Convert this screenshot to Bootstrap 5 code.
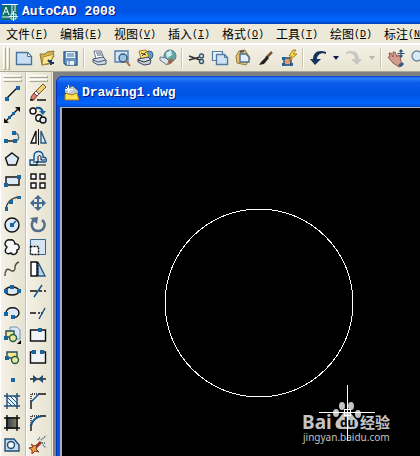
<!DOCTYPE html>
<html lang="zh-CN">
<head>
<meta charset="utf-8">
<meta name="viewport" content="width=device-width, initial-scale=1">
<title>AutoCAD 2008</title>
<link href="https://cdn.jsdelivr.net/npm/bootstrap@5.3.0/dist/css/bootstrap.min.css" rel="stylesheet">
<style>
  :root { --face: #ece9d8; --line: #c5c2b0; }
  body { background: var(--face); font-family: "Noto Sans CJK SC", "Liberation Sans", sans-serif; font-size: 12px; color: #000; }
  button { border: 0; background: none; padding: 0; color: inherit; flex: none; }
  button:hover { background: #c1d2ee; }
  .titlebar { height: 24px; padding-left: 2px; background: linear-gradient(#0058e6 0, #0054e3 45%, #0066ff 85%, #0050d8 93%, #003bb5 100%); }
  .caption-text { font: bold 13px/20px "Liberation Mono", monospace; color: #fff; text-shadow: 1px 1px 0 #0a1883; margin: 0; white-space: pre; }
  .menu-row { height: 20px; padding-left: 6px; background: var(--face); border-bottom: 1px solid #fff; }
  .menu-btn { width: 42px; margin-right: 12px; text-align: left; line-height: 18px; white-space: nowrap; display: flex; align-items: center; }
  .menu-key { font: 10px/18px "Liberation Mono", monospace; padding-top: 2px; }
  .tool-row { height: 28px; border-top: 1px solid #fff; border-bottom: 1px solid #aca899; background: linear-gradient(#f3f1e6, #e8e4d2); }
  .grip-v { width: 12px; height: 23px; padding-left: 3px; gap: 1px; }
  .grip-v i { width: 3px; border: 1px solid #fff; border-right-color: #aca899; border-bottom-color: #aca899; }
  .grip-h { height: 12px; padding: 3px 3px 0 2px; gap: 1px; }
  .grip-h i { height: 3px; border: 1px solid #fff; border-right-color: #aca899; border-bottom-color: #aca899; }
  .sep { width: 6px; height: 20px; flex: none; padding-left: 2px; }
  .sep::before { content: ""; display: block; width: 2px; height: 100%; border-left: 1px solid #c8c4b2; border-right: 1px solid #fff; }
  .tb { width: 23px; height: 23px; display: grid; place-items: center; }
  .tb.wide { width: 24px; }
  .tb.drop { width: 12px; }
  .side { width: 26px; flex: none; background: linear-gradient(90deg, #f4f1e5, #e6e2d0); border-right: 1px solid var(--line); border-left: 1px solid #fff; overflow: hidden; }
  .side button { height: 22px; padding-right: 2px; display: grid; place-items: center; }
  svg.ico { width: 20px; height: 20px; display: block; fill: none; stroke: #111; stroke-width: 1.4; }
  svg.ico .b { stroke: #0f548c; } svg.ico .dot { fill: #1766a0; stroke: none; } svg.ico .pale { fill: #dceaf7; }
  .mdi { background: #808080; padding: 4px 0 0 3px; border-left: 1px solid var(--face); min-width: 0; }
  .doc { background: #0850dd; border-top-left-radius: 7px; padding-left: 4px; min-width: 0; overflow: hidden; box-shadow: inset 1px 1px 0 #0831b8; }
  .doc-title { height: 31px; margin-left: -3px; padding: 3px 0 0 6px; gap: 2px; background: linear-gradient(#0a43c4 0, #2b80ff 8%, #0a5ce9 22%, #0054e3 60%, #0066ff 88%, #0049c8 100%); border-top-left-radius: 7px; }
  .canvas { background: #000; border-left: 2px solid #a5aec0; border-top: 1px solid #a5aec0; min-height: 0; }
  .canvas svg { width: 100%; height: 100%; display: block; }
  .wm { fill: #c4c4c4; font-family: "Noto Sans", "Noto Sans CJK SC", sans-serif; }
</style>
<script src="https://cdn.jsdelivr.net/npm/bootstrap@5.3.0/dist/js/bootstrap.bundle.min.js"></script>
</head>
<body class="d-flex flex-column vh-100 overflow-hidden">
<header class="titlebar d-flex align-items-center flex-shrink-0">
  <svg width="16" height="18" viewBox="0 0 16 18" class="me-1" aria-hidden="true"><path fill="#126b68" d="M0 1h16v16H0z"/><path stroke="#e8ffff" fill="none" d="M0 1.500h16M1 12L4 4l3 8M2 9h4M10 2v9M13 2v7M0 14h8M9 11h5v5H9zM11.500 8v10M7 13.500h9"/></svg>
  <h1 class="caption-text">AutoCAD 2008</h1>
</header>
<nav class="menu-row d-flex flex-shrink-0" aria-label="菜单">
  <button class="menu-btn">文件<span class="menu-key">(<u>F</u>)</span></button>
  <button class="menu-btn">编辑<span class="menu-key">(<u>E</u>)</span></button>
  <button class="menu-btn">视图<span class="menu-key">(<u>V</u>)</span></button>
  <button class="menu-btn">插入<span class="menu-key">(<u>I</u>)</span></button>
  <button class="menu-btn">格式<span class="menu-key">(<u>O</u>)</span></button>
  <button class="menu-btn">工具<span class="menu-key">(<u>T</u>)</span></button>
  <button class="menu-btn">绘图<span class="menu-key">(<u>D</u>)</span></button>
  <button class="menu-btn">标注<span class="menu-key">(<u>N</u>)</span></button>
</nav>
<div class="tool-row d-flex align-items-center flex-shrink-0" role="toolbar" aria-label="标准">
  <div class="grip-v d-flex flex-shrink-0"><i></i><i></i></div>
  <button class="tb" aria-label="新建"><svg class="ico" viewBox="0 0 20 20"><path fill="#c9dff2" stroke="#49749d" d="M2.500 4.500h11l4 4v8h-15z"/><path fill="#fff" stroke="#49749d" stroke-width="1" d="M13.500 4.500v4h4z"/></svg></button>
  <button class="tb" aria-label="打开"><svg class="ico" viewBox="0 0 20 20"><path fill="#d9b64b" stroke="#8b7630" stroke-width="1" d="M3 6h5l2-2 7-1-1 3 1 2-5 8-7 1z"/><path fill="#fae68d" stroke="#a8883a" stroke-width="1" d="M6 9l11-3-4 9-8 2z"/><path stroke="#173a60" stroke-width="2" d="M11 12l3 3 3 0M14 12v5"/></svg></button>
  <button class="tb" aria-label="保存"><svg class="ico" viewBox="0 0 20 20"><path fill="#6593bd" stroke="#2d5d8c" d="M4 4h13v13H6l-2-2z"/><path fill="#e8f3fb" stroke="none" d="M6 4h9v6H6zM7 13h7v4H7z"/><path stroke="#6f9cc0" d="M7 6h7M7 8h7M9 13v4"/></svg></button>
  <span class="sep"></span>
  <button class="tb" aria-label="打印"><svg class="ico" viewBox="0 0 20 20"><path fill="#fff" stroke="#62738c" stroke-width="1" d="M5 3h7l3 7-8 1z"/><path fill="#d2d9e4" stroke="#465873" stroke-width="1" d="M4 11l10-2 3 3v4l-8 1-5-3z"/><path stroke="#465873" stroke-width="1" d="M4 12l5 2 8-2M7 5h5M8 7h5"/></svg></button>
  <button class="tb" aria-label="打印预览"><svg class="ico" viewBox="0 0 20 20"><path fill="#d5e6f5" stroke="#557fa7" d="M3 3h13v11H3z"/><circle cx="11" cy="10" r="4" fill="#9fc4e3" stroke="#315c86"/><path stroke="#ad7042" stroke-width="2" d="M14 13l4 5"/></svg></button>
  <button class="tb" aria-label="发布"><svg class="ico" viewBox="0 0 20 20"><circle cx="14" cy="7" r="4" fill="#5e9dbf" stroke="#315d86" stroke-width="1"/><path fill="#ffe174" stroke="#a47c23" stroke-width="1" d="M4 3l7-1 3 7-8 2z"/><path fill="#cbd3df" stroke="#3e4960" stroke-width="1" d="M3 11l10-2 3 3-1 4-6 1-6-3z"/><path stroke="#313540" stroke-width="1" d="M3 12l6 2 6-2M6 5l5 2M7 8l4-4"/></svg></button>
  <button class="tb" aria-label="三维DWF"><svg class="ico" viewBox="0 0 20 20"><circle cx="12" cy="8" r="6" fill="#62a8a5" stroke="#54758f" stroke-width="1"/><path fill="#d9edf1" stroke="none" d="M8 5l5-3 1 5-5 3z"/><path fill="#dce5ed" stroke="#66788a" stroke-width="1" d="M2 9l6 1 3 3-2 4-7-5z"/><path fill="#b25a3a" stroke="none" d="M11 12l4-2-1 5-4 2z"/></svg></button>
  <span class="sep"></span>
  <button class="tb" aria-label="剪切"><svg class="ico" viewBox="0 0 20 20"><path stroke="#333" d="M2 8l11 4M2 12l11-3"/><circle cx="14.500" cy="8" r="2" stroke="#34536f"/><circle cx="14.500" cy="13.500" r="2" stroke="#34536f"/></svg></button>
  <button class="tb" aria-label="复制"><svg class="ico" viewBox="0 0 20 20"><path fill="#e8f3fb" stroke="#527ca2" stroke-width="1.200" d="M2.500 3.500h10v9h-10z"/><path fill="#cfe2f3" stroke="#527ca2" d="M6.500 6.500h8l3 3v7h-11z"/><path stroke="#527ca2" stroke-width="1" d="M14.500 6.500v3h3"/></svg></button>
  <button class="tb" aria-label="粘贴"><svg class="ico" viewBox="0 0 20 20"><path fill="#dfc37a" stroke="#9a793c" stroke-width="1" d="M6 3l6-1 5 8-4 7-9-2-1-7z"/><path fill="#e2effa" stroke="#4c6f91" d="M7 6h6l3 3v5H7z"/><path stroke="#555" stroke-width="2" d="M7 4l4-1"/></svg></button>
  <button class="tb" aria-label="特性匹配"><svg class="ico" viewBox="0 0 20 20"><path stroke="#7b5736" stroke-width="2.500" d="M16 4l-6 6"/><path fill="#222" stroke="none" d="M11 8l2 2-5 6-5 1 2-3z"/></svg></button>
  <button class="tb" aria-label="块编辑器"><svg class="ico" viewBox="0 0 20 20"><path fill="#e39a79" stroke="#294e70" d="M5 10h7v7H5z"/><path fill="#ffe14c" stroke="#aa8014" stroke-width="1" d="M14 2l-4 6h3l-3 5 8-7h-4l3-4z"/><path class="dot" d="M3 9h3v3H3zM11 15h3v3h-3zM3 15h3v3H3z"/></svg></button>
  <span class="sep"></span>
  <button class="tb wide" aria-label="放弃"><svg class="ico" viewBox="0 0 20 20"><path fill="#16355e" stroke="none" d="M18 4C10 1 5 5 5 11H2l5 6 6-6H9c0-4 4-7 9-5z"/></svg></button>
  <button class="tb drop" aria-label="放弃列表"><svg width="6" height="4" viewBox="0 0 6 4"><path fill="#111c4c" d="M0 0h6L3 4z"/></svg></button>
  <button class="tb wide" aria-label="重做"><svg class="ico" viewBox="0 0 20 20"><path fill="#c7c8c5" stroke="none" d="M2 4c8-3 13 1 13 7h3l-5 6-6-6h4C11 7 7 4 2 6z"/></svg></button>
  <button class="tb drop" aria-label="重做列表"><svg width="6" height="4" viewBox="0 0 6 4"><path fill="#b9b8b0" d="M0 0h6L3 4z"/></svg></button>
  <span class="sep"></span>
  <button class="tb" aria-label="实时平移"><svg class="ico" viewBox="0 0 20 20"><path fill="#d69b8b" stroke="#8e5c56" stroke-width="1" d="M2 9l2 0-1-4 2 0 2 4 0-5 2 0 2 5 1-2 2 1 1 6 2 3-4 2-6-4z"/><path stroke="#294e78" stroke-width="1.200" d="M15 2v7M11.500 5.500h7M13.500 3.500L15 2l1.500 1.500M13.500 7.500L15 9l1.500-1.500"/><path fill="#345d8c" stroke="none" d="M12 17l4-3 2 2-3 3z"/></svg></button>
  <button class="tb" aria-label="实时缩放"><svg class="ico" viewBox="0 0 20 20"><circle cx="8" cy="8" r="5" fill="#d8eaf6" stroke="#6f879d"/><path stroke="#946b4c" stroke-width="3" d="M12 12l5 5"/></svg></button>
</div>
<main class="d-flex flex-grow-1 overflow-hidden">
  <div class="side d-flex flex-column" role="toolbar" aria-label="绘图">
    <div class="grip-h d-flex flex-column"><i></i><i></i></div>
    <button aria-label="直线"><svg class="ico" viewBox="0 0 20 20"><path d="M4 16L16 4"/><path class="dot" d="M3 14h4v4H3zM14 3h4v4h-4z"/></svg></button>
    <button aria-label="构造线"><svg class="ico" viewBox="0 0 20 20"><path d="M3 17L17 3"/><path fill="#111" stroke="none" d="M18 2v5l-5-5zM2 18v-5l5 5z"/><path class="dot" d="M6 11h3v3H6zM10 7h3v3h-3z"/></svg></button>
    <button aria-label="多段线"><svg class="ico" viewBox="0 0 20 20"><path d="M3 14h10"/><path stroke="#5d7484" d="M13 14c5 0 5-8-1-8"/><path class="dot" d="M2 12h4v4H2zM11 12h4v4h-4zM10 4h4v4h-4z"/></svg></button>
    <button aria-label="正多边形"><svg class="ico" viewBox="0 0 20 20"><path class="pale" d="M10 4l6.500 5-2.500 7H6L3.500 9z"/></svg></button>
    <button aria-label="矩形"><svg class="ico" viewBox="0 0 20 20"><path class="pale" d="M4 6h13v8H4z"/><path class="dot" d="M2 12h4v4H2zM15 4h4v4h-4z"/></svg></button>
    <button aria-label="圆弧"><svg class="ico" viewBox="0 0 20 20"><path stroke="#444" d="M4 17c0-7 5-12 13-13"/><path class="dot" d="M3 14h3v4H3zM7 7h4v4H7zM15 3h4v3h-4z"/></svg></button>
    <button aria-label="圆"><svg class="ico" viewBox="0 0 20 20"><circle class="pale" cx="10" cy="10" r="7"/><path class="b" d="M10 10l4-4"/><path class="dot" d="M8 8h4v4H8z"/></svg></button>
    <button aria-label="修订云线"><svg class="ico" viewBox="0 0 20 20"><path fill="#f6f8fa" d="M5 10C1 7 4 2 8 3c3-1 5 2 5 4 4-1 6 5 2 6 1 4-4 6-6 3-4 2-8-1-4-6z"/></svg></button>
    <button aria-label="样条曲线"><svg class="ico" viewBox="0 0 20 20"><path d="M3 17c0-6 2-8 5-6s5 1 5-2 1-5 4-6" stroke="#4c453b"/></svg></button>
    <button aria-label="椭圆"><svg class="ico" viewBox="0 0 20 20"><ellipse class="pale" cx="10" cy="10" rx="7" ry="4"/><path class="dot" d="M2 8h4v4H2zM8 4h4v4H8zM15 8h4v4h-4z"/></svg></button>
    <button aria-label="椭圆弧"><svg class="ico" viewBox="0 0 20 20"><path fill="#dceaf7" d="M4 10c0-7 13-7 13 0 0 3-3 5-6 4"/><path class="dot" d="M2 9h4v4H2zM9 12h4v4H9z"/></svg></button>
    <button aria-label="插入块"><svg class="ico" viewBox="0 0 20 20"><path fill="#d7e7f5" stroke="#6e94b8" stroke-width="1" d="M8 2h7l3 3v9H8z"/><path fill="#f2e690" stroke="#214d5d" d="M4 6h8v6H4z"/><circle cx="11" cy="13" r="3.500" fill="#e8e6a2" stroke="#235b43"/><path class="dot" d="M2 11h4v4H2z"/><path fill="#000" stroke="none" d="M19 15v4h-4z"/></svg></button>
    <button aria-label="创建块"><svg class="ico" viewBox="0 0 20 20"><path fill="#f2e690" stroke="#214d5d" d="M5 5h10v6H5z"/><circle cx="13" cy="13" r="3.500" fill="#e8e6a2" stroke="#235b43"/><path class="dot" d="M3 9h4v4H3z"/></svg></button>
    <button aria-label="点"><svg class="ico" viewBox="0 0 20 20"><path class="dot" d="M9 9h4v4H9z"/></svg></button>
    <button aria-label="图案填充"><svg class="ico" viewBox="0 0 20 20"><path fill="#e8f2fb" stroke="none" d="M4 4h12v12H4z"/><path class="b" stroke-width="1" d="M5 6l9 9M8 5l8 8M5 10l5 5M12 5l4 4"/><path d="M2 5h16M2 15h16M5 2v16M15 2v16" stroke="#234c70"/></svg></button>
    <button aria-label="渐变色"><svg class="ico" viewBox="0 0 20 20"><defs><linearGradient id="grad"><stop stop-color="#27394c"/><stop offset="1" stop-color="#8f8965"/></linearGradient></defs><path fill="url(#grad)" stroke="none" d="M4 4h12v12H4z"/><path d="M2 5h16M2 15h16M5 2v16M15 2v16"/></svg></button>
    <button aria-label="面域"><svg class="ico" viewBox="0 0 20 20"><path fill="#c6ddf1" stroke="#214c74" d="M3 4h9l5 6v6H3z"/><circle cx="9" cy="10" r="3.500" fill="#f3f7fa" stroke="#214c74"/></svg></button>
  </div>
  <div class="side d-flex flex-column" role="toolbar" aria-label="修改">
    <div class="grip-h d-flex flex-column"><i></i><i></i></div>
    <button aria-label="删除"><svg class="ico" viewBox="0 0 20 20"><path fill="#edd071" stroke="#7a5728" stroke-width="1" d="M15 1l3 3-7 7-3-3z"/><path fill="#fff" stroke="#555" stroke-width="1" d="M8 8l3 3-2 2-3-3z"/><path fill="#d87d73" stroke="#8c382e" stroke-width="1" d="M6 10l3 3-3 4H3v-3z"/><path d="M2 17h3m4 0h9"/></svg></button>
    <button aria-label="复制对象"><svg class="ico" viewBox="0 0 20 20"><circle cx="5" cy="6" r="3" fill="#fff"/><circle cx="11" cy="13" r="3.200" fill="#fff"/><circle cx="15" cy="15" r="3" class="pale"/><path class="b" stroke-width="2" d="M8 3c4-1 6 1 7 4"/><path class="dot" d="M11 6h7l-3 4z"/></svg></button>
    <button aria-label="镜像"><svg class="ico" viewBox="0 0 20 20"><path fill="#fff" d="M8 4v12H3z"/><path class="pale" d="M13 4v12h5z" stroke="#28577f"/><path d="M10.500 2v16" stroke-width="1"/></svg></button>
    <button aria-label="偏移"><svg class="ico" viewBox="0 0 20 20"><path class="b pale" d="M2 16v-5h4V7c0-6 9-6 9 0v1c4 0 4 5 2 5H9v3z"/><path stroke-width="1" d="M2 16h16M5 13h5V8c0-2 3-2 3 0v3h4"/></svg></button>
    <button aria-label="阵列"><svg class="ico" viewBox="0 0 20 20"><path fill="#f4f7fb" d="M3 3h5v5H3zM12 3h5v5h-5zM3 12h5v5H3zM12 12h5v5h-5z"/></svg></button>
    <button aria-label="移动"><svg class="ico" viewBox="0 0 20 20"><path fill="#466b90" stroke="none" d="M10 2l4 4h-3v3h3V6l4 4-4 4v-3h-3v3h3l-4 4-4-4h3v-3H6v3l-4-4 4-4v3h3V6H6z"/></svg></button>
    <button aria-label="旋转"><svg class="ico" viewBox="0 0 20 20"><path stroke="#536f8c" stroke-width="2.500" d="M6 5c-4 4-2 11 4 11s9-7 4-11"/><path fill="#536f8c" stroke="none" d="M2 3l8-1-1 7z"/></svg></button>
    <button aria-label="缩放"><svg class="ico" viewBox="0 0 20 20"><path fill="#d5e5f3" stroke="#36658e" stroke-width="1" d="M2.500 2.500h15v15h-15z"/><path fill="#fff" stroke-dasharray="2 1" d="M2.500 9.500h8v8h-8z"/></svg></button>
    <button aria-label="拉伸"><svg class="ico" viewBox="0 0 20 20"><path fill="#fff" d="M3 3h6v14H3z"/><path fill="#b8d4ec" stroke="#28577f" d="M10 3l7 14h-7z"/><path d="M9.500 3v14" stroke-dasharray="2 1"/></svg></button>
    <button aria-label="修剪"><svg class="ico" viewBox="0 0 20 20"><path d="M2 10h7m2 0h3m2 0h2"/><path class="b" d="M6 16L14 4"/></svg></button>
    <button aria-label="延伸"><svg class="ico" viewBox="0 0 20 20"><path d="M2 10h6m2 0h2m1 0h2"/><path class="b" d="M11 16l6-11"/></svg></button>
    <button aria-label="打断于点"><svg class="ico" viewBox="0 0 20 20"><path fill="#f0f4f8" d="M2.500 5h15v11h-15z"/><path class="dot" d="M10 3h4v4h-4z"/></svg></button>
    <button aria-label="打断"><svg class="ico" viewBox="0 0 20 20"><path fill="#f0f4f8" d="M6 5H2.500v11h15V5H14"/><path class="dot" d="M4 3h4v4H4zM12 3h4v4h-4z"/></svg></button>
    <button aria-label="合并"><svg class="ico" viewBox="0 0 20 20"><path d="M2 10h16"/><path fill="#234b70" stroke="none" d="M5 6l5 4-5 4zM15 6l-5 4 5 4z"/></svg></button>
    <button aria-label="倒角"><svg class="ico" viewBox="0 0 20 20"><path stroke-dasharray="1 1" d="M3 10V3h8"/><path d="M3 10v8M11 3h7"/><path class="b" d="M3 11l8-8"/></svg></button>
    <button aria-label="圆角"><svg class="ico" viewBox="0 0 20 20"><path stroke-dasharray="1 1" d="M3 12V3h9"/><path d="M3 12v6M12 3h6"/><path class="b" stroke-width="2" d="M3 13C4 8 7 4 14 3"/></svg></button>
    <button aria-label="分解"><svg class="ico" viewBox="0 0 20 20"><path stroke="#9b3626" stroke-width="3" d="M6 14l7-7"/><path fill="#e5a13d" stroke="#8e3325" stroke-width="1" d="M3 9l3 2 3-1-1 4 3 3-4-1-3 3 0-4-3-2 4-1z"/><path stroke="#354f77" stroke-dasharray="1 1" d="M10 5l2-3M13 5l5-4M14 8l4 0M15 10l3 3"/></svg></button>
  </div>
  <section class="mdi d-flex flex-grow-1">
    <article class="doc d-flex flex-column flex-grow-1">
      <div class="doc-title d-flex align-items-center flex-shrink-0">
        <svg width="17" height="18" viewBox="0 0 17 18" aria-hidden="true"><path fill="#bbc9ca" d="M2 6l8-4 5 5-1 7H2z"/><path fill="#ffe052" stroke="#a87c13" d="M2 16V9l7 2 5-2 2 7z"/><path stroke="#fff" d="M5.500 1v8M2 5.500h8M3 3l5 5"/><path stroke="#254876" d="M9 1l5 4M1 11l2-2"/></svg>
        <h2 class="caption-text">Drawing1.dwg</h2>
      </div>
      <div class="canvas flex-grow-1">
        <svg role="img" aria-label="圆">
          <g class="wm">
            <text x="240" y="321" font-size="19" font-weight="700">Bai</text>
            <ellipse cx="274" cy="305" rx="3" ry="4"/><ellipse cx="280" cy="298" rx="3" ry="4"/><ellipse cx="289" cy="298" rx="3" ry="4"/><ellipse cx="296" cy="306" rx="3" ry="4"/>
            <path d="M285 304c5 0 6 5 9 7 5 5 1 11-4 10h-10c-6 1-9-5-4-10 3-2 4-7 9-7z"/>
            <text x="278" y="319" font-size="12" font-weight="700" fill="#000">du</text>
            <text x="298" y="320" font-size="15" font-weight="700">经验</text>
            <text x="241" y="333" font-size="10">jingyan.baidu.com</text>
          </g>
          <g fill="none" stroke="#fff" shape-rendering="crispEdges">
            <circle cx="197" cy="195" r="94"/>
            <path d="M257 304.500h56M285.500 277v56M282.500 301.500h6v6h-6z"/>
          </g>
        </svg>
      </div>
    </article>
  </section>
</main>
</body>
</html>
